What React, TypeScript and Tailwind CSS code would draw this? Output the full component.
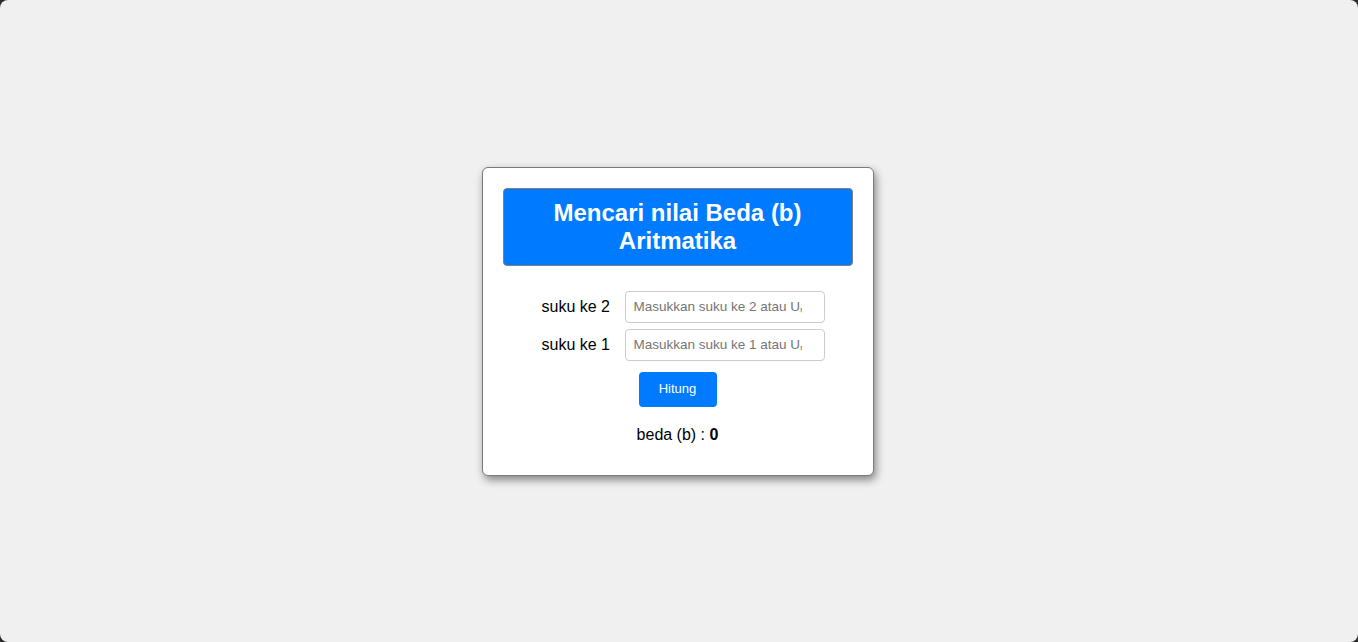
import React from "react";

export default function App() {
  return (
    <div className="bg-[#2b2b2b] h-[642px] w-full" style={{ fontFamily: '"Liberation Sans", Arial, sans-serif' }}>
      <div className="h-full w-full bg-[#f0f0f0] rounded-[8px] flex items-center justify-center">
        <div className="w-[392px] mr-[3px] bg-white border border-[#7a7a7a] rounded-[6px] shadow-[2px_4px_8px_rgba(0,0,0,0.45)] px-[20px] pt-[20px] pb-[31px] flex flex-col items-center">
          <div className="w-[350px] h-[78px] bg-[#007bff] border border-[#808080] rounded-[4px] flex items-center justify-center">
            <h1 className="text-white font-bold text-[24px] leading-[28px] text-center px-[40px]">
              Mencari nilai Beda (b) Aritmatika
            </h1>
          </div>
          <div className="mt-[25px] flex flex-col gap-[6px]">
            <div className="flex items-center">
              <label className="ml-[11px] mr-[14px] text-[16px] text-black w-[69px]">suku ke 2</label>
              <input
                type="text"
                placeholder="Masukkan suku ke 2 atau Uₙ"
                className="w-[200px] h-[32px] border border-[#cccccc] rounded-[4px] pl-[8px] pr-[22px] text-[13.5px] placeholder:text-[#757575] outline-none"
                style={{ fontFamily: '"Liberation Sans", Arial, sans-serif' }}
              />
            </div>
            <div className="flex items-center">
              <label className="ml-[11px] mr-[14px] text-[16px] text-black w-[69px]">suku ke 1</label>
              <input
                type="text"
                placeholder="Masukkan suku ke 1 atau Uₙ"
                className="w-[200px] h-[32px] border border-[#cccccc] rounded-[4px] pl-[8px] pr-[22px] text-[13.5px] placeholder:text-[#757575] outline-none"
                style={{ fontFamily: '"Liberation Sans", Arial, sans-serif' }}
              />
            </div>
          </div>
          <button className="mt-[11px] w-[78px] h-[35px] bg-[#007bff] text-white text-[13px] rounded-[4px]">
            Hitung
          </button>
          <p className="mt-[19px] text-[16px] leading-[18px] text-black">
            beda (b) : <b>0</b>
          </p>
        </div>
      </div>
    </div>
  );
}
